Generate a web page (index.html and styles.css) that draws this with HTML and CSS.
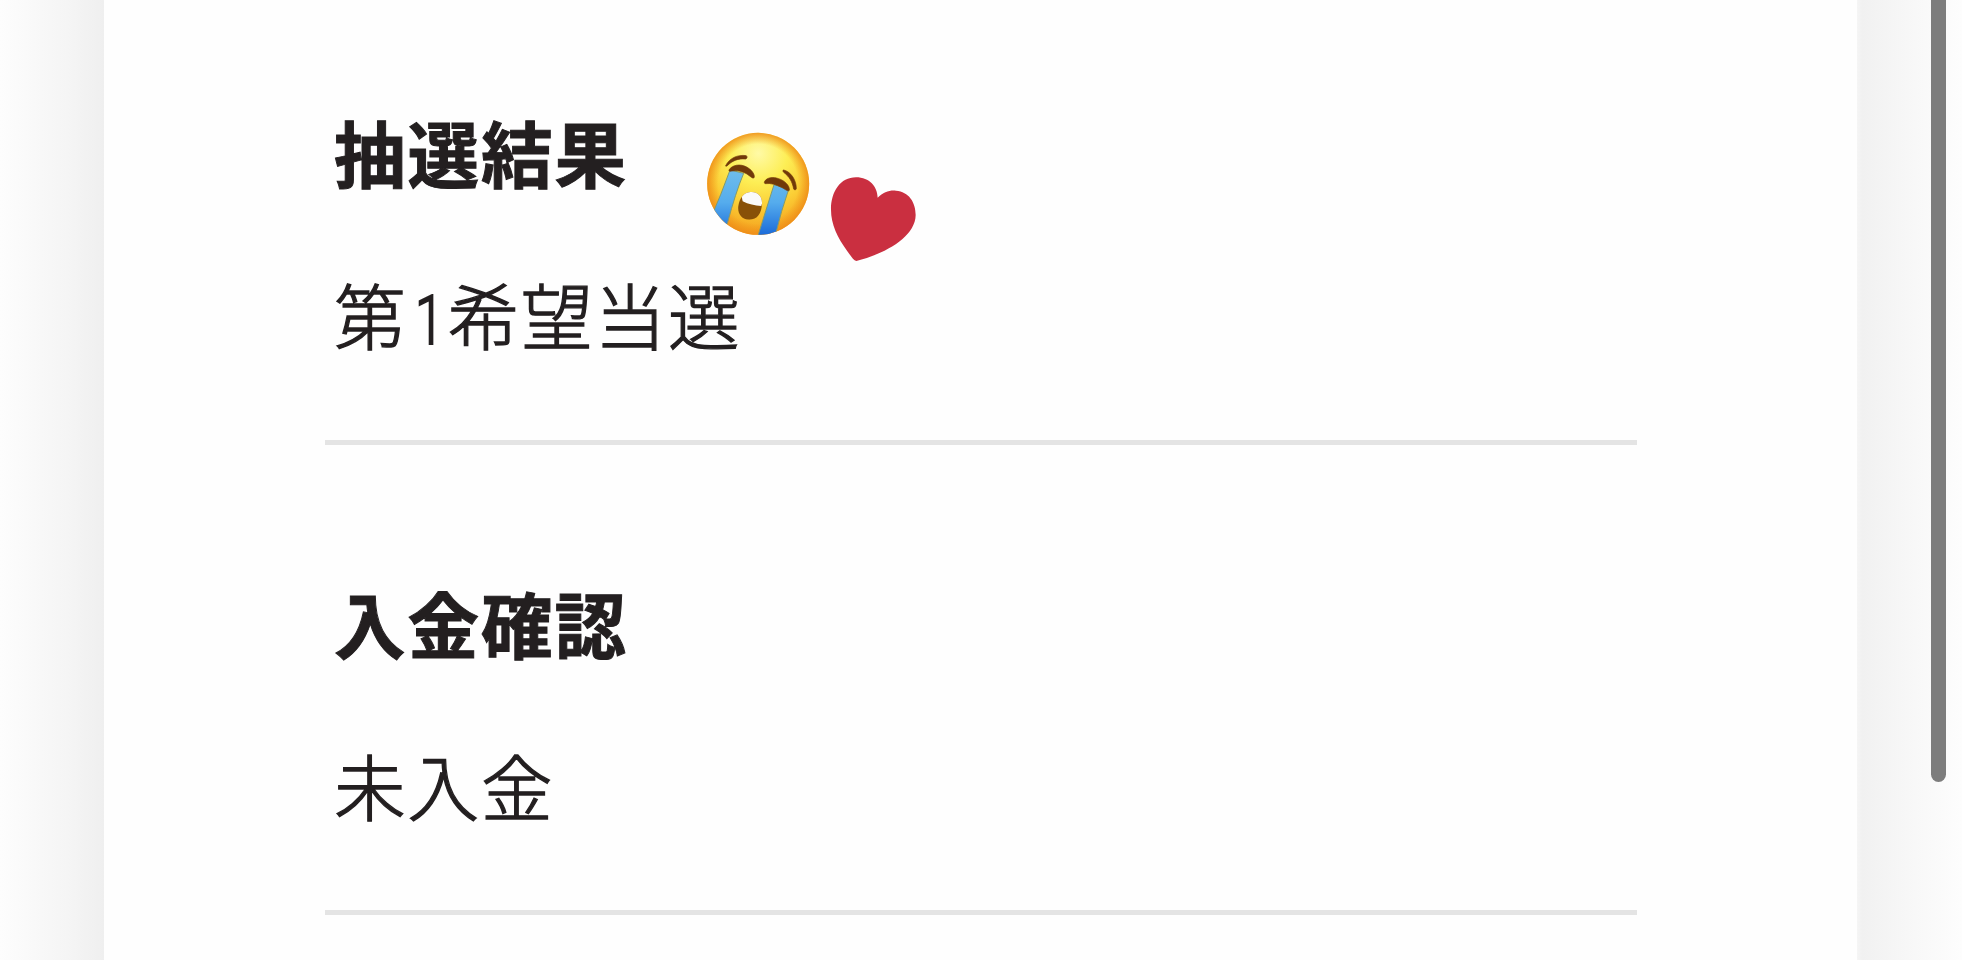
FILE: index.html
```html
<!DOCTYPE html>
<html lang="ja">
<head>
<meta charset="utf-8">
<title>抽選結果</title>
<link rel="stylesheet" href="styles.css">
</head>
<body>
<div class="page">
  <div class="edge edge-left"></div>
  <main class="card">
    <section class="entry entry-first">
      <h2 class="label">抽選結果</h2>
      <p class="value">第<span class="digit">1</span>希望当選</p>
    </section>
    <section class="entry">
      <h2 class="label">入金確認</h2>
      <p class="value">未入金</p>
    </section>
  </main>
  <div class="edge edge-right"></div>
  <svg class="sticker cry" viewBox="0 0 390 375">
    <defs>
      <radialGradient id="face" cx="205" cy="100" r="250" gradientUnits="userSpaceOnUse">
        <stop offset="0" stop-color="#fffaa6"/>
        <stop offset=".35" stop-color="#fdee55"/>
        <stop offset=".65" stop-color="#fbcd35"/>
        <stop offset="1" stop-color="#f39a1b"/>
      </radialGradient>
      <radialGradient id="rim" cx="204.500" cy="191.500" r="153" gradientUnits="userSpaceOnUse">
        <stop offset=".78" stop-color="#f0921a" stop-opacity="0"/>
        <stop offset="1" stop-color="#ee8c18" stop-opacity=".85"/>
      </radialGradient>
      <linearGradient id="tear" x1="0" y1="150" x2="0" y2="345" gradientUnits="userSpaceOnUse">
        <stop offset="0" stop-color="#6fbdec"/>
        <stop offset=".5" stop-color="#55aced"/>
        <stop offset="1" stop-color="#1b6bd9"/>
      </linearGradient>
      <clipPath id="disc"><circle cx="204.500" cy="191.500" r="153"/></clipPath>
      <clipPath id="mouth"><path d="M181 216C202 214 217 228 216 250C215 281 202 299 178 299C154 298 142 280 145 258C149 234 161 218 181 216Z"/></clipPath>
    </defs>
    <circle cx="204.500" cy="191.500" r="153" fill="url(#face)"/>
    <circle cx="204.500" cy="191.500" r="153" fill="url(#rim)"/>
    <g clip-path="url(#disc)">
      <path d="M120 150L161 160Q136 220 113 307L105 330L60 300Q95 220 120 150Z" fill="url(#tear)" stroke="#7f9a72" stroke-width="3"/>
      <path d="M252 194L296 208Q274 270 255 350H203Q228 270 252 194Z" fill="url(#tear)" stroke="#7f9a72" stroke-width="3"/>
    </g>
    <g clip-path="url(#mouth)">
      <path d="M130 205H230V310H130Z" fill="#885008"/>
      <path d="M150 205H230L214 258Q184 257 158 244Z" fill="#fafafa"/>
    </g>
    <g fill="#713909" stroke="#713909" stroke-width="2">
      <path d="M107 137C118 115 142 103 169 107C173 110 171 116 167 117C144 115 127 122 112 137C109 139 106 139 107 137Z"/>
      <path d="M118 148C133 130 161 132 179 147C192 157 196 172 191 174C186 176 178 165 165 159C149 151 134 151 120 154C117 154 116 151 118 148Z"/>
      <path d="M224 184C231 172 249 170 266 176C285 182 300 198 298 211C294 216 285 207 274 202C257 193 242 189 227 191C223 191 222 188 224 184Z"/>
      <path d="M281 150C302 155 319 179 319 206C318 210 313 211 311 207C307 185 298 170 281 157C278 154 278 150 281 150Z"/>
    </g>
  </svg>
  <svg class="sticker heart" viewBox="0 0 345 315">
    <path d="M124 288C115 286 107 272 96 257C68 218 48 178 48 134C48 80 76 37 123 37C164 37 187 65 188 98C205 81 224 75 243 77C281 80 302 111 302 150C301 218 205 268 124 288Z" fill="#ca2f40"/>
  </svg>
  <div class="scrollbar"></div>
</div>
</body>
</html>
```
FILE: styles.css
```css
* {
  box-sizing: border-box;
}

body {
  margin: 0;
  background: #fff;
  font-family: "Noto Sans CJK JP", sans-serif;
  color: #231f20;
}

.page {
  position: relative;
  display: grid;
  grid-template-columns: 104px 1753px 105px;
  height: 960px;
  overflow: hidden;
}

.edge-left {
  background: linear-gradient(to right, #fdfdfd, #f8f8f8 40%, #f5f5f5 65%, #efefef);
}

.edge-right {
  background: linear-gradient(to left, #fdfdfd, #f8f8f8 45%, #f1f1f1 95%, #f5f5f5);
}

.card {
  padding: 0 220px 0 221px;
  background: #fefefe;
}

.entry {
  height: 470.5px;
  padding: 135px 0 0 9px;
  border-bottom: 5px solid #e4e4e4;
}

.entry-first {
  height: 444.500px;
  padding-top: 109px;
}

.label,
.value {
  margin: 0;
  height: 84px;
  font-size: 71.5px;
  line-height: 84px;
  letter-spacing: 2px;
  white-space: nowrap;
}

.label {
  font-weight: 700;
  -webkit-text-stroke: 1px #231f20;
}

.value {
  margin-top: 78px;
  font-weight: 300;
  -webkit-text-stroke: 1.3px #231f20;
}

.digit {
  display: inline-block;
  width: 40px;
  font-family: Roboto, sans-serif;
  font-size: 69px;
  line-height: 1;
  -webkit-text-stroke-width: 2.2px;
  transform: scaleX(.75);
  transform-origin: 28px 50%;
}

.sticker {
  position: absolute;
}

.cry {
  left: 690px;
  top: 120px;
  width: 130px;
  height: 125px;
}

.heart {
  left: 815px;
  top: 165px;
  width: 115px;
  height: 105px;
}

.scrollbar {
  position: absolute;
  top: -20px;
  left: 1930.5px;
  width: 15.5px;
  height: 802px;
  border-radius: 8px;
  background: #7d7d7d;
}
```
